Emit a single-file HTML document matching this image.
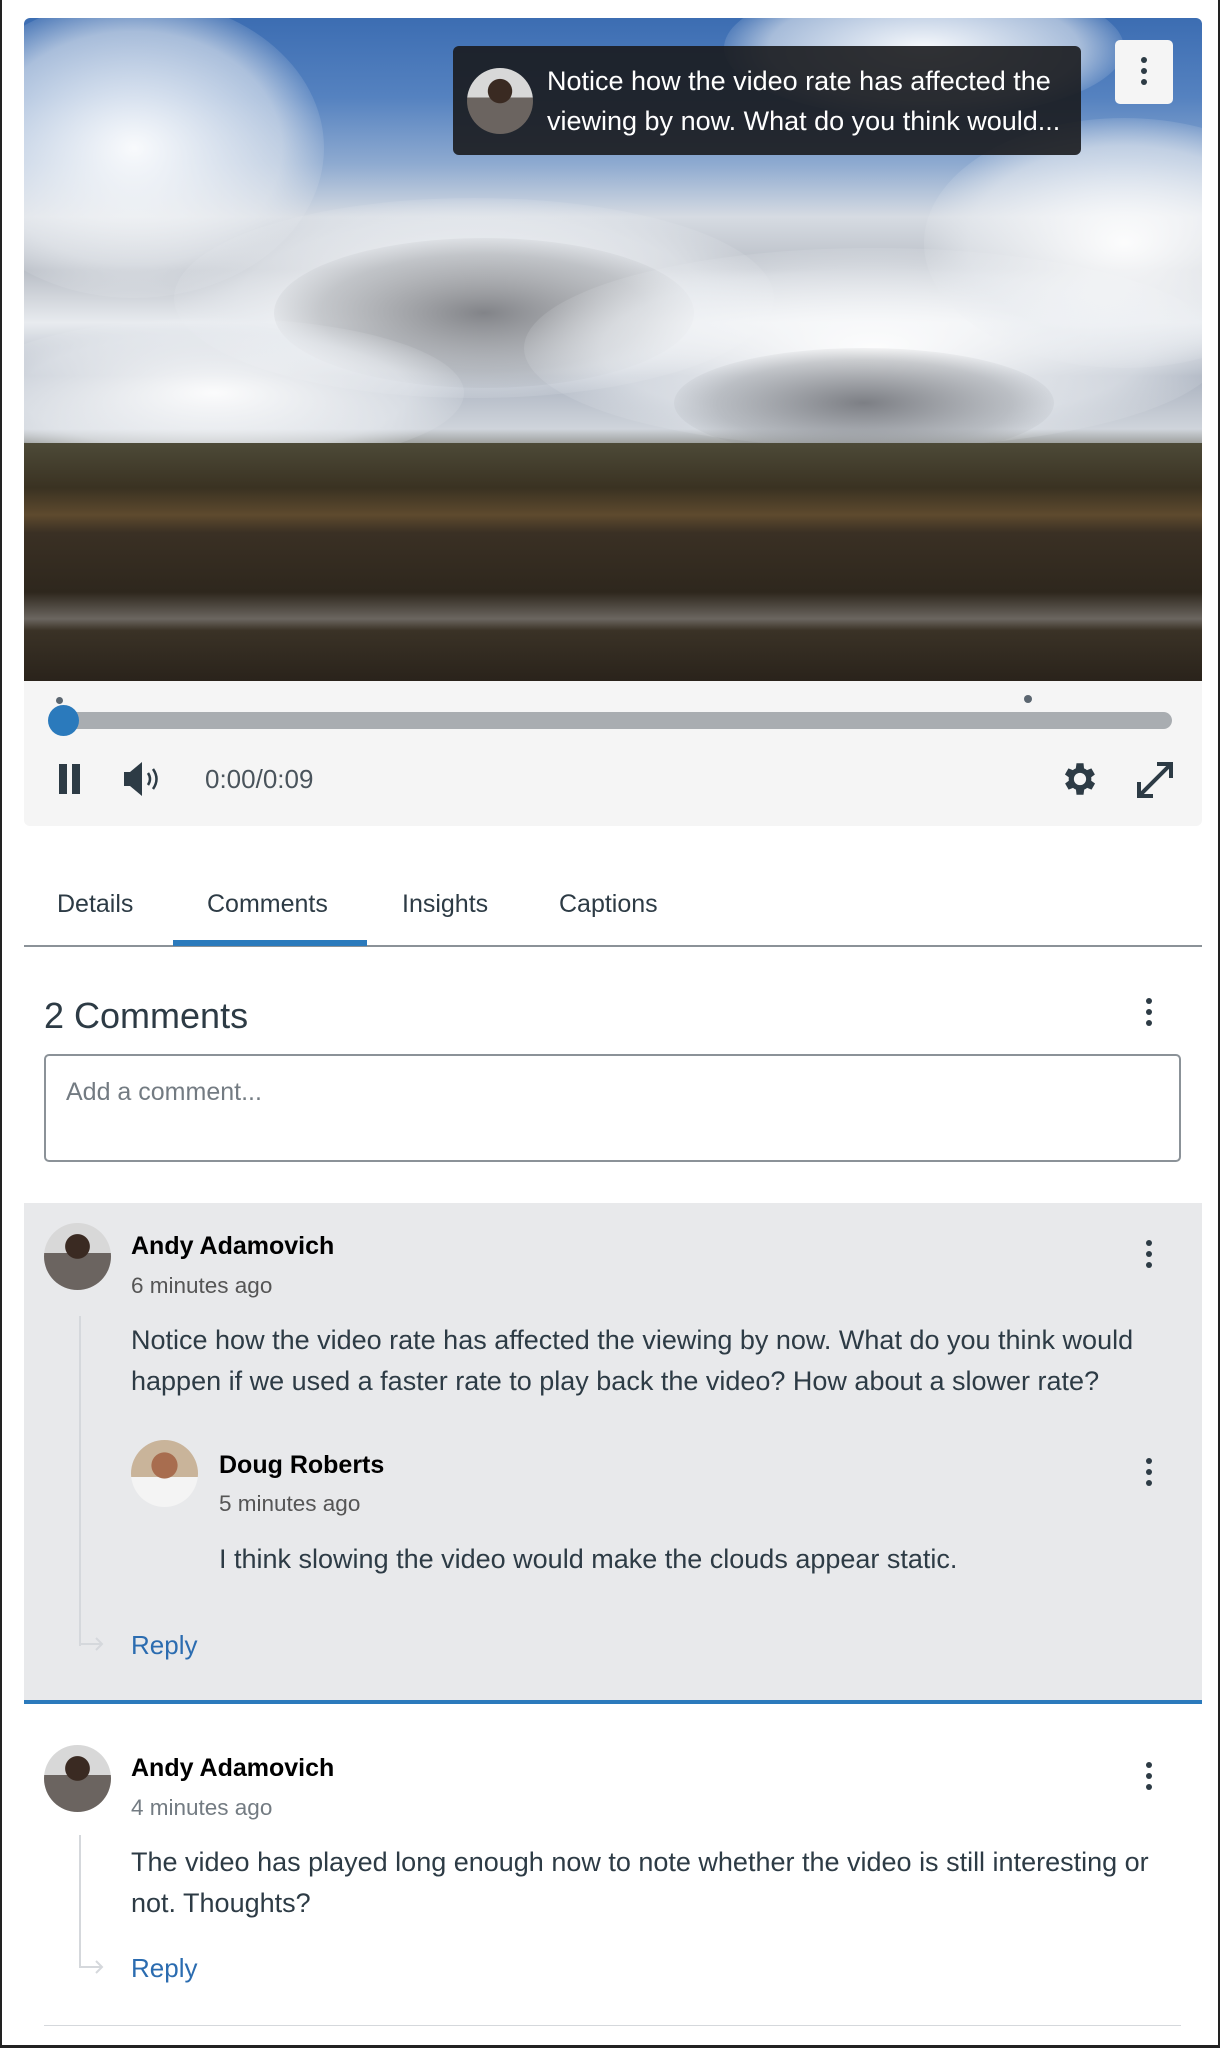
<!DOCTYPE html>
<html><head><meta charset="utf-8"><style>
*{box-sizing:border-box;margin:0;padding:0}
body{width:1220px;height:2048px;background:#fff;font-family:"Liberation Sans",sans-serif;color:#2d3b45;position:relative;overflow:hidden;border-left:2px solid #222;border-right:2px solid #222;border-bottom:3px solid #222}
.abs{position:absolute}
.video{left:22px;top:18px;width:1178px;height:663px;overflow:hidden;border-radius:6px 6px 0 0;
background:linear-gradient(180deg,#3c6db2 0%,#5582c0 12%,#8eaad0 22%,#d6dbe2 30%,#b9bec6 38%,#e8ebef 46%,#aab2bf 54%,#cfd4db 62%,#5e5d50 67%,#3a3528 72%,#4b3f2c 80%,#2a241b 88%,#3a3126 93%,#77726a 95%,#3a3228 97%,#2b2520 100%)}
.cloud{position:absolute;border-radius:50%;background:radial-gradient(ellipse at center,rgba(255,255,255,.95),rgba(235,238,242,.6) 55%,rgba(255,255,255,0) 75%)}
.dcloud{position:absolute;border-radius:50%;background:radial-gradient(ellipse at center,rgba(90,92,98,.75),rgba(120,124,130,.35) 55%,rgba(120,124,130,0) 75%)}
.tip{left:451px;top:46px;width:628px;height:109px;background:rgba(25,27,30,.9);border-radius:6px;color:#fff;font-size:27px;line-height:40px}
.av{border-radius:50%;background:radial-gradient(circle at 50% 35%,#3a2a22 0 22%,transparent 23%),linear-gradient(180deg,#d8d8d8 0 45%,#6b6460 45% 100%);}
.av2{border-radius:50%;background:radial-gradient(circle at 50% 38%,#a86d4f 0 24%,transparent 25%),linear-gradient(180deg,#c9b49a 0 55%,#f4f4f4 55% 100%);}
.kb{width:6px}
.kb i{display:block;width:6px;height:6px;border-radius:50%;background:#2d3b45;margin-bottom:5px}
.ctrl{left:22px;top:681px;width:1178px;height:145px;background:#f5f5f5;border-radius:0 0 6px 6px}
.tab{top:890px;font-size:25px;color:#2d3b45}
.name{font-weight:bold;font-size:25px;color:#000}
.time{font-size:22.5px;color:#555}
.body{font-size:27px;line-height:41px;color:#2d3b45;white-space:nowrap}
.reply{font-size:26px;color:#2b6cb0}
.thread{width:2px;background:#d5d8dc}
</style></head><body>
<div class="abs video">
 <div class="cloud" style="left:-80px;top:-20px;width:380px;height:300px"></div>
 <div class="cloud" style="left:150px;top:180px;width:600px;height:200px"></div>
 <div class="dcloud" style="left:250px;top:220px;width:420px;height:150px"></div>
 <div class="cloud" style="left:500px;top:230px;width:700px;height:200px"></div>
 <div class="dcloud" style="left:650px;top:330px;width:380px;height:110px"></div>
 <div class="cloud" style="left:-60px;top:300px;width:500px;height:150px"></div>
 <div class="cloud" style="left:900px;top:100px;width:400px;height:250px"></div>
 <div class="cloud" style="left:700px;top:-40px;width:400px;height:140px"></div>
 <div class="abs" style="left:0;top:425px;width:1178px;height:90px;background:linear-gradient(180deg,#4d4a38,#3a3222 50%,#5e4a2e 80%,#3a3024)"></div>
 <div class="abs" style="left:0;top:515px;width:1178px;height:148px;background:linear-gradient(180deg,#3a3024,#2e271d 40%,#6b6660 58%,#3a3226 66%,#2a231b)"></div>
</div>
<div class="abs tip">
 <div class="abs av" style="left:14px;top:22px;width:66px;height:66px"></div>
 <div class="abs" style="left:94px;top:15px;white-space:nowrap">Notice how the video rate has affected the<br>viewing by now. What do you think would...</div>
</div>
<div class="abs" style="left:1113px;top:40px;width:58px;height:64px;background:#f5f5f5;border-radius:5px"><div class="kb abs" style="left:26px;top:17px"><i></i><i></i><i></i></div></div>

<div class="abs ctrl"></div>
<div class="abs" style="left:54px;top:697px;width:7px;height:7px;border-radius:50%;background:#5b6670"></div>
<div class="abs" style="left:1022px;top:695px;width:8px;height:8px;border-radius:50%;background:#5b6670"></div>
<div class="abs" style="left:50px;top:712px;width:1120px;height:17px;border-radius:9px;background:#a9adb1"></div>
<div class="abs" style="left:46px;top:705px;width:31px;height:31px;border-radius:50%;background:#2b7abc"></div>
<div class="abs" style="left:57px;top:764px;width:8px;height:30px;background:#2d3b45"></div>
<div class="abs" style="left:70px;top:764px;width:8px;height:30px;background:#2d3b45"></div>
<svg class="abs" style="left:120px;top:760px" width="48" height="38" viewBox="0 0 48 38"><path d="M2 12h6l12-10v34L8 26H2z" fill="#2d3b45"/><path d="M26 13q4 6 0 12M31 9q7 10 0 20" stroke="#2d3b45" stroke-width="2.5" fill="none"/></svg>
<div class="abs" style="left:203px;top:764px;font-size:26px;color:#4a545c">0:00/0:09</div>
<svg class="abs" style="left:1057px;top:758px" width="42" height="42" viewBox="0 0 24 24"><path fill="#2d3b45" d="M19.4 13a7.5 7.5 0 000-2l2.1-1.6-2-3.5-2.5 1a7 7 0 00-1.7-1L15 3h-4l-.4 2.9a7 7 0 00-1.7 1l-2.5-1-2 3.5L6.6 11a7.5 7.5 0 000 2l-2.1 1.6 2 3.5 2.5-1a7 7 0 001.7 1L11 21h4l.4-2.9a7 7 0 001.7-1l2.5 1 2-3.5zM13 15.5a3.5 3.5 0 110-7 3.5 3.5 0 010 7z" transform="translate(-1 0)"/></svg>
<svg class="abs" style="left:1131px;top:758px" width="44" height="44" viewBox="0 0 44 44"><path d="M6 38L38 6M24 6h14v14M6 24v14h14" stroke="#2d3b45" stroke-width="4" fill="none"/></svg>

<div class="abs tab" style="left:55px">Details</div>
<div class="abs tab" style="left:205px">Comments</div>
<div class="abs tab" style="left:400px">Insights</div>
<div class="abs tab" style="left:557px">Captions</div>
<div class="abs" style="left:22px;top:945px;width:1178px;height:2px;background:#8b9298"></div>
<div class="abs" style="left:171px;top:940px;width:194px;height:6px;background:#2b7abc"></div>

<div class="abs" style="left:42px;top:995px;font-size:36px;color:#2d3b45">2 Comments</div>
<div class="abs kb" style="left:1144px;top:998px"><i></i><i></i><i></i></div>
<div class="abs" style="left:42px;top:1054px;width:1137px;height:108px;border:2px solid #8b9298;border-radius:5px"></div>
<div class="abs" style="left:64px;top:1078px;font-size:25px;color:#737b82">Add a comment...</div>

<div class="abs" style="left:22px;top:1203px;width:1178px;height:497px;background:#e8e9eb"></div>
<div class="abs" style="left:22px;top:1700px;width:1178px;height:4px;background:#2b7abc"></div>
<div class="abs av" style="left:42px;top:1223px;width:67px;height:67px"></div>
<div class="abs name" style="left:129px;top:1232px">Andy Adamovich</div>
<div class="abs time" style="left:129px;top:1273px">6 minutes ago</div>
<div class="abs kb" style="left:1144px;top:1240px"><i></i><i></i><i></i></div>
<div class="abs thread" style="left:77px;top:1316px;height:330px"></div>
<svg class="abs" style="left:76px;top:1632px" width="30" height="22"><path d="M2 0v12h22M18 6l6 6-6 6" stroke="#d5d8dc" stroke-width="2" fill="none"/></svg>
<div class="abs body" style="left:129px;top:1320px">Notice how the video rate has affected the viewing by now. What do you think would<br>happen if we used a faster rate to play back the video? How about a slower rate?</div>
<div class="abs av2" style="left:129px;top:1440px;width:67px;height:67px"></div>
<div class="abs name" style="left:217px;top:1451px">Doug Roberts</div>
<div class="abs time" style="left:217px;top:1491px">5 minutes ago</div>
<div class="abs kb" style="left:1144px;top:1458px"><i></i><i></i><i></i></div>
<div class="abs body" style="left:217px;top:1539px">I think slowing the video would make the clouds appear static.</div>
<div class="abs reply" style="left:129px;top:1630px">Reply</div>

<div class="abs av" style="left:42px;top:1745px;width:67px;height:67px"></div>
<div class="abs name" style="left:129px;top:1754px">Andy Adamovich</div>
<div class="abs time" style="left:129px;top:1795px;color:#737b82">4 minutes ago</div>
<div class="abs kb" style="left:1144px;top:1762px"><i></i><i></i><i></i></div>
<div class="abs thread" style="left:77px;top:1835px;height:133px"></div>
<svg class="abs" style="left:76px;top:1955px" width="30" height="22"><path d="M2 0v12h22M18 6l6 6-6 6" stroke="#d5d8dc" stroke-width="2" fill="none"/></svg>
<div class="abs body" style="left:129px;top:1842px">The video has played long enough now to note whether the video is still interesting or<br>not. Thoughts?</div>
<div class="abs reply" style="left:129px;top:1953px">Reply</div>
<div class="abs" style="left:42px;top:2025px;width:1137px;height:1px;background:#d5d8dc"></div>
</body></html>
